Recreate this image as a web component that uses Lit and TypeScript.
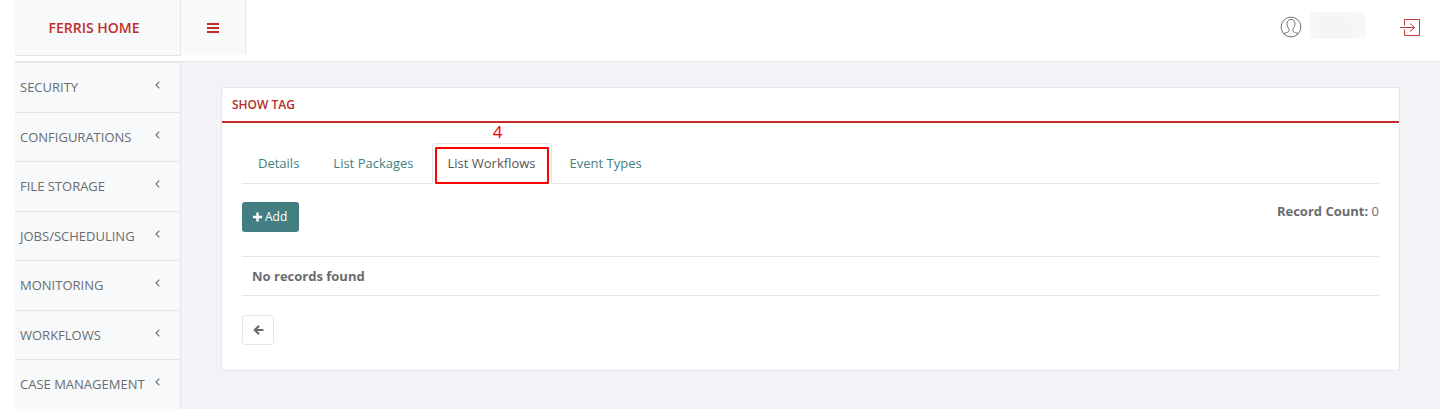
import { LitElement, html, css } from "lit";
import { customElement, property } from "lit/decorators.js";
import { classMap } from "lit/directives/class-map.js";

@customElement("top-bar")
class TopBar extends LitElement {
  static styles = css`
    :host { display: flex; height: 61px; box-sizing: border-box; padding-left: 15px; background: #fff; }
    .brand, .toggle { display: flex; align-items: center; justify-content: center; box-sizing: border-box; background: #f7f9fb; color: #c12e2a; }
    .brand { width: 166px; height: 56px; border-right: 1px solid #e7e8ea; border-bottom: 1px solid #e4e5e7; font-weight: 600; font-size: 14px; padding-right: 7px; }
    .toggle { width: 65px; height: 55px; border-right: 1px solid #e7e8ea; }
    .right { flex: 1; display: flex; justify-content: flex-end; padding-right: 19px; }
    .user { margin: 16px 8px 0 0; width: 22px; height: 22px; color: #6f7174; }
    .name { margin: 12px 34px 0 0; width: 56px; height: 27px; background: radial-gradient(ellipse at 45% 50%, #f4f4f4 20%, #f9f9f9 100%); }
    .logout { margin-top: 18px; width: 21px; height: 19px; }
    svg { display: block; fill: none; stroke: currentColor; }
    .logout svg { stroke: #c93a37; }
  `;
  render() {
    return html`
      <div class="brand">FERRIS HOME</div>
      <div class="toggle">
        <svg width="12" height="10" viewBox="0 0 12 10" stroke-width="2"><path d="M0 1h12M0 5h12M0 9h12" /></svg>
      </div>
      <div class="right">
        <div class="user">
          <svg width="22" height="22" viewBox="0 0 22 22"><circle cx="11" cy="11" r="9.9" /><path d="M3.8 17.7c1.2-1 4-1 4.9-2 .7-.8.5-2.3-.2-3.4C7 10 6.600 7.500 7.400 5.800c.6-1.500 2-2.300 3.600-2.300s3 .8 3.600 2.300c.8 1.700.4 4.200-1.100 6.500-.7 1.100-.9 2.600-.2 3.400.9 1 3.700 1 4.900 2" /></svg>
        </div>
        <div class="name"></div>
        <div class="logout">
          <svg width="21" height="19" viewBox="0 0 21 19"><path d="M4.500 7.500v-6h15v16h-15v-6M0 9.500h14.500M10 5.500l4.500 4-4.500 4" /></svg>
        </div>
      </div>`;
  }
}

@customElement("side-nav")
class SideNav extends LitElement {
  @property({ attribute: false }) items: string[] = [];
  static styles = css`
    :host { display: block; flex: none; width: 165px; padding-top: 0.25px; border-right: 1px solid #e4e5e7; border-top: 1px solid #e4e5e7; background: #f7f9fb; }
    .item { display: flex; justify-content: space-between; box-sizing: border-box; height: 49.5px; padding: 14px 20px 0 5px; border-bottom: 1px solid #e4e5e7; font-size: 13px; line-height: 20px; color: #6a6c6f; white-space: nowrap; }
    svg { display: block; margin-top: 4px; fill: none; stroke: #6a6c6f; stroke-width: 1.1; }
  `;
  render() {
    return this.items.map((name) => html`<div class="item"><span>${name}</span>
      <svg width="5" height="8" viewBox="0 0 5 8"><path d="M4.300.6L1 4l3.300 3.400" /></svg></div>`);
  }
}

@customElement("tab-strip")
class TabStrip extends LitElement {
  @property({ attribute: false }) tabs: string[] = [];
  @property() active = "";
  static styles = css`
    :host { display: flex; height: 41px; box-sizing: border-box; border-bottom: 1px solid #e4e5e7; }
    .tab { position: relative; box-sizing: border-box; height: 41px; margin-right: 2px; padding: 9px 15px 0; border: 1px solid transparent; border-bottom: 0; border-radius: 4px 4px 0 0; font-size: 13px; line-height: 20px; font-weight: 500; color: #437f82; white-space: nowrap; }
    .active { border-color: #e4e5e7; background: #fff; color: #555; }
    .mark { position: absolute; left: 2px; right: 2px; top: 3px; height: 37px; box-sizing: border-box; border: 2px solid #f00; border-radius: 1px; }
    .step { position: absolute; left: 0; right: 0; top: -27px; padding-left: 12px; text-align: center; font: 17px/30px "Noto Sans", sans-serif; color: #f00; }
  `;
  render() {
    return this.tabs.map((t) => {
      const active = t === this.active;
      return html`<div class=${classMap({ tab: true, active })}>${t}${active ? html`<div class="mark"></div><div class="step">4</div>` : ""}</div>`;
    });
  }
}

@customElement("app-root")
class AppRoot extends LitElement {
  static styles = css`
    :host { display: block; height: 409px; overflow: hidden; background: #fff; font-family: "Open Sans", sans-serif; color: #6a6c6f; font-size: 13px; }
    .body { display: flex; height: 348px; box-sizing: border-box; padding-left: 15px; background: linear-gradient(90deg, #fff 15px, #e4e5e7 15px) top / 100% 1px no-repeat; padding-top: 1px; }
    .main { flex: 1; padding: 25px 40px 0; background: #f1f3f7; }
    .panel { box-sizing: border-box; width: 1179px; height: 284px; border: 1px solid #e4e5e7; border-radius: 2px; background: #fff; }
    .title { box-sizing: border-box; height: 35px; padding: 8px 10px 0; border-bottom: 2px solid #c12e2a; font-size: 12px; line-height: 18px; font-weight: 600; color: #b62c2a; }
    .content { padding: 20px 20px 0; }
    .tools { display: flex; justify-content: space-between; margin-top: 18px; height: 54px; }
    .add { display: flex; align-items: center; gap: 3px; box-sizing: border-box; width: 57px; height: 30px; padding: 0 0 1px 11px; border-radius: 3px; background: #437f82; color: #fff; font-size: 12px; font-weight: 500; }
    .count { line-height: 18px; }
    .empty { box-sizing: border-box; height: 40px; padding: 0 10px; border: solid #e4e5e7; border-width: 1px 0; line-height: 38px; font-weight: 700; }
    .back { display: flex; align-items: center; justify-content: center; box-sizing: border-box; width: 32px; height: 30px; margin-top: 19px; border: 1px solid #e4e5e7; border-radius: 3px; }
    svg { display: block; fill: none; stroke: currentColor; }
  `;
  render() {
    return html`
      <top-bar></top-bar>
      <div class="body">
        <side-nav .items=${["SECURITY", "CONFIGURATIONS", "FILE STORAGE", "JOBS/SCHEDULING", "MONITORING", "WORKFLOWS", "CASE MANAGEMENT"]}></side-nav>
        <div class="main">
          <div class="panel">
            <div class="title">SHOW TAG</div>
            <div class="content">
              <tab-strip .tabs=${["Details", "List Packages", "List Workflows", "Event Types"]} active="List Workflows"></tab-strip>
              <div class="tools">
                <div class="add"><svg width="9" height="10" viewBox="0 0 9 10" stroke-width="2.400"><path d="M4.500.5v9M0 5h9" /></svg><span>Add</span></div>
                <div class="count"><b>Record Count:</b> 0</div>
              </div>
              <div class="empty">No records found</div>
              <div class="back"><svg width="11" height="10" viewBox="0 0 11 10" stroke-width="2.200"><path d="M10.500 5H2M6 .9L1.800 5 6 9.100" /></svg></div>
            </div>
          </div>
        </div>
      </div>`;
  }
}
